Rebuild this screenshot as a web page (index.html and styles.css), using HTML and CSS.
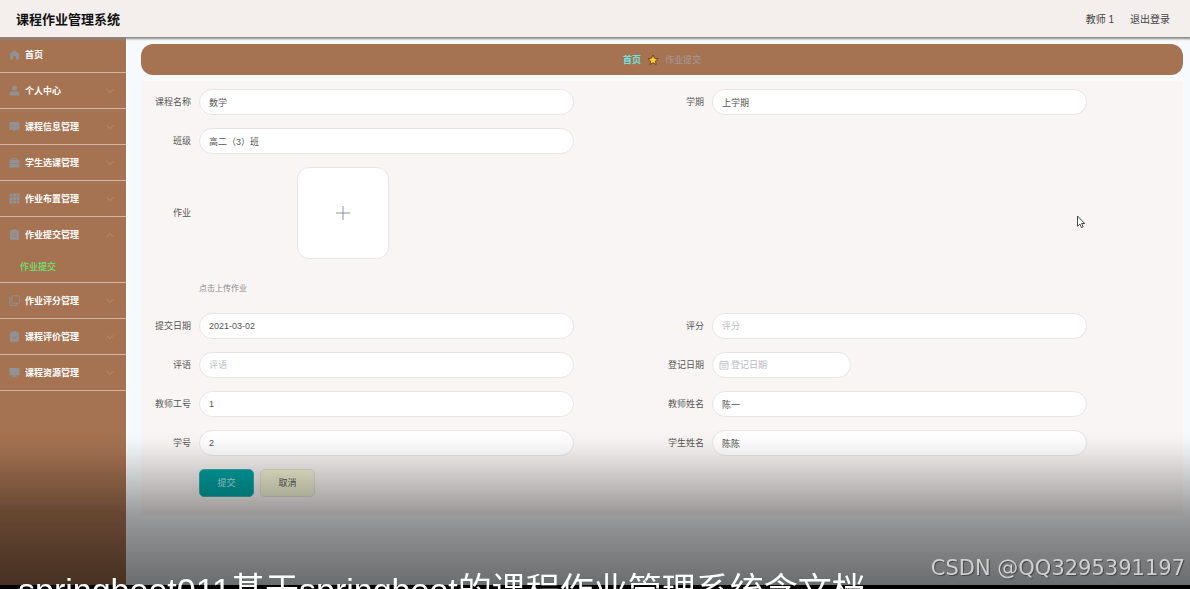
FILE: index.html
```
<!DOCTYPE html>
<html lang="zh-CN">
<head>
<meta charset="utf-8">
<title>课程作业管理系统</title>
<link rel="stylesheet" href="styles.css">
</head>
<body>
<svg class="sprite" aria-hidden="true">
  <symbol id="chevron" viewBox="0 0 8 8"><path d="M1 2.500 4 5.500 7 2.500" fill="none" stroke="currentColor" stroke-width=".8"/></symbol>
</svg>

<header class="topbar">
  <h1 class="brand">课程作业管理系统</h1>
  <div class="account">
    <span>教师 1</span>
    <a class="logout" href="#">退出登录</a>
  </div>
</header>

<div class="shell">
  <nav class="sidebar">
    <ul class="menu">
      <li class="menu-item"><a class="menu-link" href="#">
        <svg class="menu-icon" viewBox="0 0 10 10"><path d="M5 .8 9.600 5 9 5.600V9.500H6.200V6.500H3.800V9.500H1V5.600L.4 5z"/></svg>
        <span class="menu-text">首页</span></a></li>
      <li class="menu-item"><a class="menu-link" href="#">
        <svg class="menu-icon" viewBox="0 0 10 10"><circle cx="5" cy="2.700" r="2.300"/><path d="M.5 9.500V8q0-2.200 2.500-2.200h4Q9.500 5.800 9.500 8v1.500z"/></svg>
        <span class="menu-text">个人中心</span><svg class="chevron"><use href="#chevron"/></svg></a></li>
      <li class="menu-item"><a class="menu-link" href="#">
        <svg class="menu-icon" viewBox="0 0 10 10"><path fill-rule="evenodd" d="M.5 1h9v7H6L4.500 9.500 3.800 8H.5zM2.300 4v1h1V4zm2.200 0v1h1V4zm2.200 0v1h1V4z"/></svg>
        <span class="menu-text">课程信息管理</span><svg class="chevron"><use href="#chevron"/></svg></a></li>
      <li class="menu-item"><a class="menu-link" href="#">
        <svg class="menu-icon" viewBox="0 0 10 10"><path fill-rule="evenodd" d="M3 .8h4v1.700h2.500v3H.5v-3H3zm.8.8v.9h2.400v-.9zM.5 6h9v3.500h-9z"/></svg>
        <span class="menu-text">学生选课管理</span><svg class="chevron"><use href="#chevron"/></svg></a></li>
      <li class="menu-item"><a class="menu-link" href="#">
        <svg class="menu-icon" viewBox="0 0 10 10"><path d="M.5.5h2.700v2.700H.5zm3.200 0h2.700v2.700H3.700zm3.200 0h2.600v2.700H6.900zM.5 3.700h2.700v2.700H.5zm3.200 0h2.700v2.700H3.700zm3.200 0h2.600v2.700H6.900zM.5 6.900h2.700v2.600H.5zm3.200 0h2.700v2.600H3.700zm3.200 0h2.600v2.600H6.900z"/></svg>
        <span class="menu-text">作业布置管理</span><svg class="chevron"><use href="#chevron"/></svg></a></li>
      <li class="menu-item"><a class="menu-link" href="#">
        <svg class="menu-icon" viewBox="0 0 10 10"><path fill-rule="evenodd" d="M1 1.200h2V.3h4v.9h2v8.500H1zM3 4v.6h4V4zm0 2.200v.6h4v-.6z"/></svg>
        <span class="menu-text">作业提交管理</span><svg class="chevron chevron-open"><use href="#chevron"/></svg></a>
        <a class="submenu-link" href="#">作业提交</a></li>
      <li class="menu-item"><a class="menu-link" href="#">
        <svg class="menu-icon" viewBox="0 0 10 10"><g fill="none" stroke="currentColor" stroke-width=".8"><rect x="2.700" y=".7" width="6.800" height="6.800" rx=".8"/><path d="M2.700 2.700H.7v6.700h6.700V7.500"/></g></svg>
        <span class="menu-text">作业评分管理</span><svg class="chevron"><use href="#chevron"/></svg></a></li>
      <li class="menu-item"><a class="menu-link" href="#">
        <svg class="menu-icon" viewBox="0 0 10 10"><path d="M1 1.200h2V.3h4v.9h2v8.500H1z"/><path d="m3 5.500 1.600 1.600L7.300 4.200" fill="none" stroke="#a57352" stroke-width=".8"/></svg>
        <span class="menu-text">课程评价管理</span><svg class="chevron"><use href="#chevron"/></svg></a></li>
      <li class="menu-item"><a class="menu-link" href="#">
        <svg class="menu-icon" viewBox="0 0 10 10"><path d="M.5.8h9v6.700h-9zM4 7.500h2v1.200h1.500v.7h-5v-.7H4z"/></svg>
        <span class="menu-text">课程资源管理</span><svg class="chevron"><use href="#chevron"/></svg></a></li>
    </ul>
  </nav>

  <main class="content">
    <div class="breadcrumb">
      <a class="crumb-home" href="#">首页</a>
      <svg class="star" viewBox="0 0 12 12"><path d="m6 1 1.500 3.200 3.500.4-2.600 2.400.7 3.500L6 8.800l-3.100 1.700.7-3.500L1 4.600l3.500-.4z" fill="#ffc832" stroke="#4b2a10" stroke-width=".7" stroke-linejoin="round"/></svg>
      <span class="crumb-current">作业提交</span>
    </div>

    <form class="form">
      <div class="field"><label for="course">课程名称</label><input class="control" id="course" type="text" value="数学"></div>
      <div class="field"><label for="term">学期</label><input class="control" id="term" type="text" value="上学期"></div>
      <div class="field row"><label for="class">班级</label><input class="control" id="class" type="text" value="高二（3）班"></div>
      <div class="field row"><label for="upload">作业</label>
        <button class="upload" id="upload" type="button" aria-label="上传"><svg viewBox="0 0 16 16" class="plus"><path d="M8 1v14M1 8h14"/></svg></button></div>
      <p class="tip row">点击上传作业</p>
      <div class="field"><label for="submitted">提交日期</label><input class="control" id="submitted" type="text" value="2021-03-02"></div>
      <div class="field"><label for="score">评分</label><input class="control" id="score" type="text" placeholder="评分"></div>
      <div class="field"><label for="comment">评语</label><input class="control" id="comment" type="text" placeholder="评语"></div>
      <div class="field"><label for="registered">登记日期</label>
        <div class="control date">
          <svg class="calendar" viewBox="0 0 10 10"><path d="M1 1.500h8v7.700H1zM1 3.700h8M3 .5v1.800M7 .5v1.800M2.500 5.300h5M2.500 7.200h5"/></svg>
          <input class="date-input" id="registered" type="text" placeholder="登记日期">
        </div></div>
      <div class="field"><label for="teacher-no">教师工号</label><input class="control" id="teacher-no" type="text" value="1"></div>
      <div class="field"><label for="teacher">教师姓名</label><input class="control" id="teacher" type="text" value="陈一"></div>
      <div class="field"><label for="student-no">学号</label><input class="control" id="student-no" type="text" value="2"></div>
      <div class="field"><label for="student">学生姓名</label><input class="control" id="student" type="text" value="陈陈"></div>
      <div class="actions row">
        <button class="btn btn-submit" type="submit">提交</button>
        <button class="btn btn-cancel" type="button">取消</button>
      </div>
    </form>
  </main>
</div>

<svg class="cursor" viewBox="0 0 10 14"><path d="M1.500 1v10.300l2.400-2.200 1.600 3.500 1.700-.8-1.600-3.300h3.100z" fill="#fff" stroke="#333" stroke-width=".9"/></svg>

<div class="shade">
  <p class="caption">springboot011基于springboot的课程作业管理系统含文档</p>
  <p class="watermark">CSDN @QQ3295391197</p>
</div>
</body>
</html>
```
FILE: styles.css
```
* { box-sizing: border-box; }

body {
  margin: 0;
  min-height: 100vh;
  display: flex;
  flex-direction: column;
  overflow: hidden;
  background: #f7fafc;
  color: #555;
  font: 9px/18px "Liberation Sans", "Noto Sans CJK SC", sans-serif;
}

a { color: inherit; text-decoration: none; }
input, button { font: inherit; color: inherit; }
.sprite { display: none; }

.topbar {
  position: relative;
  z-index: 1;
  display: flex;
  align-items: center;
  justify-content: space-between;
  height: 37px;
  padding: 2px 20px 0 16px;
  background: #f4eeed;
  box-shadow: 0 1px 2px 1px #888;
}
.brand { margin: 0; font-size: 13px; font-weight: 700; color: #111; }
.account { display: flex; gap: 16px; font-size: 10px; color: #444; }

.shell { flex: 1; display: flex; }

.sidebar { width: 126px; flex: none; background: #a57352; }
.menu { margin: 0; padding: 0; list-style: none; }
.menu-item { border-bottom: 1px solid #d0b5a4; }
.menu-link {
  display: flex;
  align-items: center;
  height: 35px;
  padding: 0 12px 0 9px;
  color: #fff;
  font-weight: 700;
}
.menu-icon { width: 11px; height: 11px; margin-right: 5px; fill: #929295; color: #929295; }
.menu-text { flex: 1; }
.chevron { width: 8px; height: 8px; color: #b99480; }
.chevron-open { transform: rotate(180deg); }
.submenu-link { display: block; height: 30px; padding: 6px 20px; color: #6be36b; font-weight: 500; }

.content { flex: 1; padding: 7px 7px 0 15px; box-shadow: inset 1px 0 #fff; }

.breadcrumb {
  display: flex;
  align-items: center;
  justify-content: center;
  gap: 6px;
  height: 31px;
  border-radius: 12px;
  background: #a57352;
}
.crumb-home { color: #6fe0dd; font-weight: 700; }
.crumb-current { color: #a79b9b; }
.star { width: 12px; height: 12px; }

.form {
  display: grid;
  grid-template-columns: 1fr 1fr;
  row-gap: 13px;
  margin-top: 6px;
  padding: 8px 8px 18px;
  background: #f9f5f4;
}
.row { grid-column: 1 / -1; }
.field {
  display: grid;
  grid-template-columns: 42px 1fr;
  column-gap: 8px;
  align-items: center;
}
.field.row { width: 50%; }
.field label { text-align: right; white-space: nowrap; }
.control {
  width: 81%;
  height: 26px;
  padding: 0 9px;
  border: 1px solid #e6e5e8;
  border-radius: 13px;
  background: #fff;
  outline: none;
}
::placeholder { color: #b8bbc1; opacity: 1; }

.date { display: flex; align-items: center; gap: 2px; width: 30%; padding: 0 6px; }
.date-input { flex: 1; min-width: 0; padding: 0; border: 0; background: none; outline: none; }
.calendar { width: 10px; height: 10px; fill: none; stroke: #b8bbc1; stroke-width: .8; }

.upload {
  display: grid;
  place-items: center;
  width: 92px;
  height: 92px;
  margin-left: 98px;
  padding: 0;
  border: 1px solid #e6e5e8;
  border-radius: 12px;
  background: #fff;
}
.plus { width: 16px; height: 16px; stroke: #8c939d; stroke-width: 1; }
.tip { height: 28px; margin: 0; padding: 8px 50px 0; font-size: 8px; color: #858a91; }

.actions { display: flex; gap: 6px; padding-left: 50px; }
.btn { width: 55px; height: 28px; padding: 0; border: 1px solid; border-radius: 5px; }
.btn-submit { background: #00a3a3; border-color: #35b5b4; color: #b9e4e4; }
.btn-cancel { background: #f2f3d4; border-color: #e2e2ce; color: #555; }

.cursor { position: absolute; left: 1076px; top: 215px; width: 10px; height: 14px; }

.shade {
  position: fixed;
  inset: auto 0 0;
  height: 159px;
  overflow: hidden;
  pointer-events: none;
  background: linear-gradient(
    transparent 0,
    rgba(0, 0, 0, .02) 12px,
    rgba(0, 0, 0, .07) 24px,
    rgba(0, 0, 0, .17) 43px,
    rgba(0, 0, 0, .3) 69px,
    rgba(0, 0, 0, .38) 84px,
    rgba(0, 0, 0, .48) 120px,
    rgba(0, 0, 0, .57) 155px,
    #000 155px);
}
.caption {
  position: absolute;
  left: 18px;
  top: 138px;
  margin: 0;
  white-space: nowrap;
  color: #fff;
  font: 34px/44px "Liberation Sans", "Noto Sans CJK SC", sans-serif;
}
.watermark {
  position: absolute;
  right: 5px;
  bottom: 4px;
  margin: 0;
  white-space: nowrap;
  color: #d0d0d0;
  font: 21px/34px "DejaVu Sans", sans-serif;
  text-shadow: 1px 1px 1px #444;
}
```
